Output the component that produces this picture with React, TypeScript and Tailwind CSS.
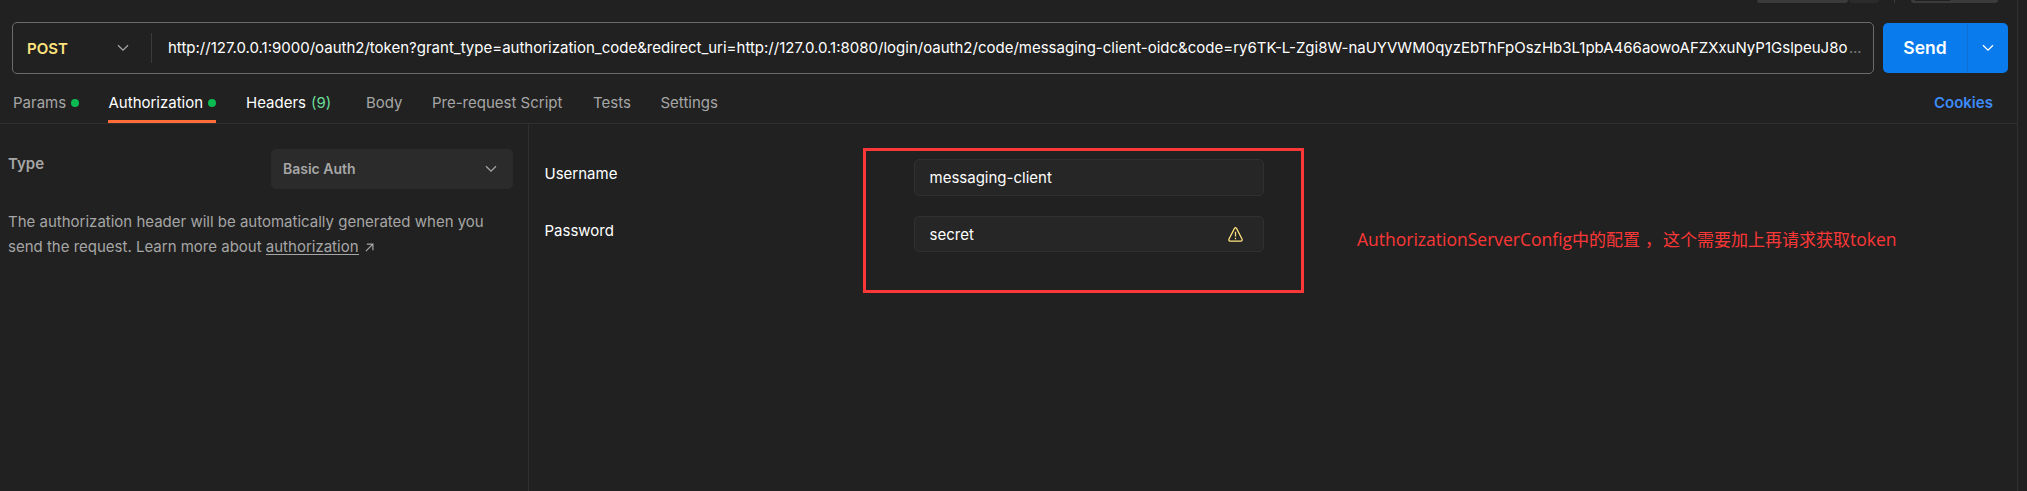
import React from "react";

function Chevron({ className }: { className: string }) {
  return (
    <svg className={className} width="12" height="8" viewBox="0 0 12 8" fill="none" stroke="currentColor" strokeWidth="1.25">
      <path d="M1 1.2 L6 6.2 L11 1.2" />
    </svg>
  );
}

function Dot() {
  return <span className="h-2 w-2 shrink-0 rounded-full bg-[#0cbb52]" />;
}

const URL_TEXT =
  "http://127.0.0.1:9000/oauth2/token?grant_type=authorization_code&redirect_uri=http://127.0.0.1:8080/login/oauth2/code/messaging-client-oidc&code=ry6TK-L-Zgi8W-naUYVWM0qyzEbThFpOszHb3L1pbA466aowoAFZXxuNyP1GslpeuJ8o";

function TopStrip() {
  return (
    <div className="flex h-[22px] items-start pl-[1757px]">
      <div className="h-[3px] w-[91px] rounded-b-[4px] bg-[#3b3b3b]" />
      <div className="ml-px h-[3px] w-[30px] rounded-b-[4px] bg-[#2b2b2b]" />
      <div className="ml-[15px] h-[3px] w-px bg-[#3b3b3b]" />
      <div className="ml-[16px] flex h-[3px] w-[87px] rounded-b-[4px] bg-[#3b3b3b] pl-1">
        <div className="h-px w-[35px] bg-[#212121]" />
      </div>
    </div>
  );
}

function RequestBar() {
  return (
    <div className="flex h-[52px] items-center pl-3">
      <div className="flex h-[52px] w-[1862px] items-center rounded-[5px] border border-[#6b6b6b] whitespace-nowrap">
        <div className="flex h-[30px] w-[139px] items-center border-r border-[#3b3b3b] pl-[14px]">
          <span className="w-[90px] pt-[2px] font-semibold text-[#ffe47e]">POST</span>
          <Chevron className="text-[#a6a6a6]" />
        </div>
        <span className="w-[1683px] pl-4 text-white">{URL_TEXT}</span>
        <span className="pl-[14px] text-[13px] font-semibold text-[#757575]">…</span>
      </div>
      <div className="ml-[9px] flex h-[50px] w-[125px] items-center rounded-[5px] bg-[#097bed] text-white">
        <div className="flex h-full w-[85px] items-center justify-center border-r border-[#0b6fd2] text-[17.5px] font-semibold">
          Send
        </div>
        <div className="flex flex-1 justify-center">
          <Chevron className="text-white" />
        </div>
      </div>
    </div>
  );
}

function Tabs() {
  return (
    <div className="flex h-[50px] border-b border-[#303030] pl-[13px] whitespace-nowrap text-[#a6a6a6]">
      <div className="flex h-[49px] w-[95px] items-center gap-[5px] pt-[9px]">
        Params
        <Dot />
      </div>
      <div className="flex h-[49px] w-[108px] items-center justify-between border-b-[3px] border-[#ff6c37] pt-[12px] pl-[0.5px] text-white">
        Authorization
        <Dot />
      </div>
      <div className="flex h-[49px] w-[120px] items-center gap-[5px] pt-[9px] pl-[30px] text-white">
        Headers <span className="text-[#6bdd9a]">(9)</span>
      </div>
      <div className="flex h-[49px] w-[66px] items-center pt-[9px] pl-[30px]">Body</div>
      <div className="flex h-[49px] w-[161px] items-center pt-[9px] pl-[30px]">Pre-request Script</div>
      <div className="flex h-[49px] w-[68px] items-center pt-[9px] pl-[30px]">Tests</div>
      <div className="flex h-[49px] flex-1 items-center pt-[9px] pl-[29.5px]">Settings</div>
      <div className="flex h-[49px] w-[83px] items-center pt-[9px] font-semibold text-[#3d8bf8]">Cookies</div>
    </div>
  );
}

function AuthType() {
  return (
    <div className="w-[529px] border-r border-[#303030] pt-[25px] pl-2 text-[#a6a6a6]">
      <div className="flex items-start">
        <span className="w-[263px] pt-[5px] font-semibold">Type</span>
        <div className="flex h-10 w-[242px] items-center justify-between rounded-[5px] bg-[#2b2b2b] pr-4 pl-3 text-[14px] font-semibold">
          Basic Auth
          <Chevron className="text-[#a6a6a6]" />
        </div>
      </div>
      <p className="mt-5 leading-[25px] whitespace-nowrap">
        The authorization header will be automatically generated when you
        <br />
        send the request. Learn more about{" "}
        <span className="inline-block h-[21px] border-b border-[#a6a6a6] leading-[25px]">authorization</span>
        <svg className="ml-[6px] inline-block" width="9" height="9" viewBox="0 0 10 10" fill="none" stroke="currentColor" strokeWidth="1.3">
          <path d="M1 9 L8.6 1.4 M2 1.2 H8.8 V8" />
        </svg>
      </p>
    </div>
  );
}

function Credentials() {
  return (
    <div className="relative flex-1 pl-[15px] text-white">
      <div className="flex pt-[35px]">
        <span className="w-[370px] pt-[5px] pl-[0.5px]">Username</span>
        <div className="flex h-[37px] w-[350px] items-center rounded-[5px] border border-[#303030] bg-[#262626] pl-[14.5px]">
          messaging-client
        </div>
      </div>
      <div className="flex pt-5">
        <span className="w-[370px] pt-[5px] pl-[0.5px]">Password</span>
        <div className="flex h-[36px] w-[350px] items-center justify-between rounded-[5px] border border-[#303030] bg-[#262626] pr-5 pl-[14.5px]">
          <span className="pt-px">secret</span>
          <svg width="15" height="15" viewBox="0 0 15 15" fill="none" stroke="#ffe47e" strokeWidth="1.25" strokeLinejoin="round">
            <path d="M6.5 1.4 Q7.5 0 8.5 1.4 L14 12 Q14.6 14 13 14 H2 Q0.4 14 1 12 Z" />
            <path d="M7.5 4.8 V9.4 M7.5 10.8 V12.2" />
          </svg>
        </div>
      </div>
      <div className="absolute top-[24px] left-[334px] h-[145px] w-[441px] border-[3px] border-[#fb3737]" />
      <div className="absolute top-[103px] left-[828px] flex items-baseline text-[17px] leading-[24px] whitespace-nowrap text-[#fb3737] [font-family:'Open_Sans','Noto_Sans_CJK_SC',sans-serif]">
        <span className="w-[306px]">
          <span className="text-[17.5px]">AuthorizationServerConfig</span>中的配置<span className="pl-[5px]">，</span>
        </span>
        <span>
          这个需要加上再请求获取<span className="text-[17.5px]">token</span>
        </span>
      </div>
    </div>
  );
}

export default function App() {
  return (
    <div className="flex h-[491px] w-[2027px] overflow-hidden bg-[#212121] text-[15px] leading-5 [font-family:Inter,'Liberation_Sans',sans-serif]">
      <div className="flex w-[2018px] flex-col border-r border-[#303030]">
        <TopStrip />
        <RequestBar />
        <Tabs />
        <div className="flex flex-1">
          <AuthType />
          <Credentials />
        </div>
      </div>
    </div>
  );
}
